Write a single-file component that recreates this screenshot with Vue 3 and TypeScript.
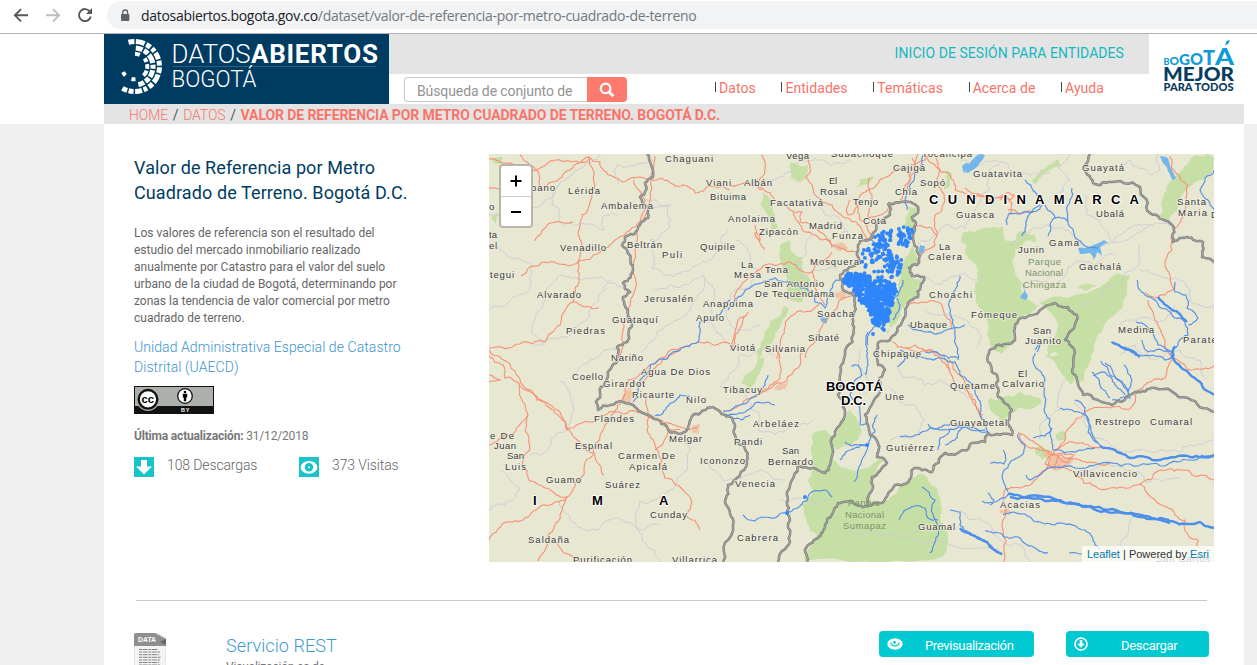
<script setup lang="ts">
type Pt = [number, number]
type Label = [string, number, number, number]

let seed = 7
const rnd = (): number => {
  seed = (seed * 16807) % 2147483647
  return seed / 2147483647
}

const parse = (s: string): Pt[] =>
  s.trim().split(/\s+/).map((p) => p.split(',').map(Number) as Pt)

// Turns a coarse polyline into an irregular, map-like line by splitting its segments.
function wiggle(s: string, amp: number, closed = false): string {
  let pts = parse(s)
  if (closed) pts.push(pts[0])
  for (let n = 0; n < 3; n++) {
    const out: Pt[] = [pts[0]]
    for (let i = 1; i < pts.length; i++) {
      const [ax, ay] = pts[i - 1]
      const [bx, by] = pts[i]
      const len = Math.hypot(bx - ax, by - ay)
      if (len > 3.5) {
        const k = (rnd() - 0.5) * 2 * amp * Math.min(len / 14, 1.2)
        out.push([(ax + bx) / 2 + (-(by - ay) / len) * k, (ay + by) / 2 + ((bx - ax) / len) * k])
      }
      out.push([bx, by])
    }
    pts = out
  }
  return 'M' + pts.map((p) => p[0].toFixed(1) + ' ' + p[1].toFixed(1)).join('L') + (closed ? 'Z' : '')
}

const parks = [
  '790,163 800,166 808,165 806,178 798,182 791,178',
  '763,192 770,200 775,215 778,228 772,230 768,215 760,205',
  '780,245 790,240 792,252 802,257 803,272 812,285 802,302 790,300 786,275 781,262',
  '784,306 789,310 778,330 768,345 759,358 756,352 766,330 776,318',
  '860,180 874,177 868,184 856,188',
  '756,380 750,388 738,384 745,376 755,368 757,357 764,358 760,372',
  '909,207 918,208 912,217 914,240 917,262 909,270 912,278 922,279 917,297 907,303 898,320 886,335 889,318 896,300 899,280 903,262 913,245 906,228',
  '946,170 952,173 950,186 944,190',
  '965,232 985,228 1003,227 1005,240 1016,240 1018,232 1028,232 1022,245 1015,250 1012,262 1017,277 1022,292 1032,302 1040,306 1020,318 1013,330 1015,342 1002,354 990,345 988,322 982,310 975,285 976,265 966,255',
  '1040,302 1062,297 1080,294 1105,284 1118,273 1129,275 1127,290 1118,312 1106,322 1096,340 1090,362 1084,380 1078,385 1075,372 1065,362 1055,352 1045,360 1048,345 1057,330 1055,318 1050,312',
  '1032,180 1040,170 1058,159 1061,166 1045,173 1035,184',
  '1078,288 1090,284 1097,286 1086,291',
  '1170,182 1182,170 1192,158 1208,154 1214,158 1212,172 1202,180 1190,187 1178,205 1168,222 1158,217 1162,200',
  '990,398 997,400 1010,396 1020,392 1040,398 1041,404 1030,410 1018,408 1010,414 1002,422 992,412 988,402',
  '1044,355 1075,357 1083,366 1077,376 1070,385 1062,375 1055,362',
  '813,433 826,430 834,438 833,460 838,465 850,470 872,464 884,460 876,474 870,490 871,502 888,500 900,486 912,478 924,475 937,488 942,508 941,522 948,540 946,552 938,558 926,560 805,561 806,551 818,538 806,520 802,505 812,495 808,480 813,470',
  '838,430 846,418 850,410 857,420 862,430 858,440 848,446 836,450 834,438',
  '1035,448 1042,446 1050,450 1049,458 1042,460 1036,454',
  '1056,434 1064,431 1067,438 1058,441',
  '491,218 497,212 495,224',
  '492,158 502,156 500,164 494,163',
  '1018,235 1035,235 1036,242 1022,243',
  '963,232 969,235 969,247 962,243',
]

const towns = [
  '622,397 628,388 633,393 631,403 623,402',
  '835,293 848,291 845,299 836,298',
  '1042,453 1052,451 1060,457 1073,459 1069,465 1058,471 1046,467 1050,462',
  '999,510 1010,506 1011,515 1001,514',
  '692,425 700,423 699,434 692,433',
  '833,244 844,243 848,249 838,251',
  '777,385 789,381 785,389 774,390',
]

const limits = [
  '489,215 500,215 515,205 530,210 545,200 560,183 575,170 590,163 600,154',
  '489,310 510,300 530,290 532,265 512,258 500,250 489,246',
  '560,183 552,205 560,222 590,224 604,230 606,215 618,215',
  '618,185 617,165 640,163 655,160',
  '545,345 532,330 540,310 545,296 560,275 585,278 605,280 625,288',
  '535,345 560,338 575,328 590,310 604,290 612,280',
  '560,381 570,395 572,415 565,430 550,438 548,450 530,455',
  '650,205 668,205 670,220 664,232 650,240 652,268 665,275 680,273 698,265 705,262 716,250 722,235 728,230',
  '645,200 656,200 672,205',
  '703,275 690,310 668,325 650,342 642,352',
  '703,275 715,290 712,315 716,332 726,340',
  '654,290 670,284 690,284 702,276',
  '752,187 770,180 788,172 800,160 815,158 830,165 850,160',
  '735,240 750,255 758,270 752,285 735,290 730,300 728,320 740,330 760,325',
  '820,200 825,215 840,220 848,232 830,240',
  '812,235 806,250 795,262 800,275 815,270 838,268',
  '730,390 748,400 760,415 758,430 775,435 790,425 812,420',
  '702,460 714,470 722,480 740,478 760,470 770,475 785,480',
  '640,500 636,520 642,540 655,550 660,562',
  '560,500 570,520 590,530 610,520 640,530 660,525',
  '500,470 520,490 505,505 489,510',
  '575,375 590,360 605,350 618,350',
  '683,430 690,450 688,470 670,490 655,500 640,502',
  '720,388 735,370 740,355 760,350 775,355',
  '780,500 800,498 830,503',
  '895,365 910,378 925,385 940,380 955,390 968,400',
  '890,388 900,402 915,405 925,420 918,435 890,440',
  '925,277 940,285 958,275 975,280 985,275',
  '918,245 930,240 945,225 965,228 975,210 990,190 985,175 1000,165',
  '1010,245 1030,230 1050,226 1070,232 1085,250 1105,245 1120,235 1135,225 1150,225',
  '1085,195 1088,215 1110,240 1118,242 1140,232 1150,225 1172,228',
  '1030,280 1050,285 1075,262 1095,265 1115,255',
  '1077,312 1085,300 1100,298 1110,285 1135,268 1140,245',
  '1140,270 1165,278 1185,282 1190,300 1214,305',
  '1120,355 1135,345 1155,360 1180,350 1200,360 1205,378',
  '1065,380 1058,395 1060,410 1045,420 1040,440',
  '1075,400 1085,425 1110,445 1130,452 1180,452 1190,445 1214,440',
  '850,530 900,538 960,548 1000,550',
  '960,510 970,520 985,522 1000,540 1020,545 1030,562',
  '1130,510 1128,525 1120,545 1122,562',
  '1085,475 1110,465 1135,472 1145,482 1180,478',
  '960,160 975,166 995,160 1010,170 1030,175 1050,172',
  '1060,195 1070,180 1058,168 1070,154',
  '1120,165 1130,160 1150,175 1160,170 1158,154',
  '1175,305 1165,320 1140,318 1120,325',
  '860,350 862,370 868,380 865,395',
  '925,310 940,315 960,318 978,330 975,348',
]

const roads = [
  '489,159 510,163 525,170 540,168 555,160 572,162 588,157 600,162 612,176 622,182 650,179 662,178 675,186 690,188 695,193 710,186 730,190',
  '520,155 530,166 540,178 543,190 552,182 570,170 590,158',
  '589,156 594,175 592,195 582,215 578,235 581,252 578,262 579,280 575,295 573,302 560,325 545,342 520,344 489,348',
  '578,262 560,264 545,262 530,267 521,276',
  '578,262 600,252 615,240 630,230 640,222',
  '573,302 585,307 599,308',
  '573,222 560,222 545,228 535,241',
  '640,222 645,200 634,180',
  '655,156 652,180 650,200 636,245 635,290 628,315 622,340 617,360',
  '489,356 503,365 505,378 525,390 550,408 562,420 567,430 592,422 605,415',
  '489,350 500,357 515,371 530,390 545,402 560,412 566,428 580,442 593,453',
  '519,385 521,398 528,415 525,430 530,450 522,465 528,478 545,488 567,497',
  '528,415 510,435 489,445',
  '489,540 510,522 530,515 550,505 567,497 580,480 593,455 603,430 615,412 622,400 628,380 650,365 668,358 680,350',
  '567,497 560,515 548,535 538,561',
  '548,535 558,545 570,555 580,562',
  '595,453 597,462 604,475',
  '605,415 625,414 645,413 660,420 675,425 690,430 697,427',
  '645,395 648,412 650,435 655,445 662,460 665,478 680,487 692,502 686,514 700,530',
  '655,450 662,445 668,430 680,430',
  '630,388 650,372 668,352 680,348 700,342 730,344',
  '723,412 740,405 760,394 780,378 780,365 776,350',
  '760,394 785,382 800,365 802,352',
  '762,155 765,170 756,182 762,190',
  '808,155 810,168 806,178 815,195 832,205 848,218 862,230 870,240',
  '730,186 750,184 762,188 775,200 790,210 802,212 800,222 820,232 832,245 845,250 858,252',
  '793,212 800,225 815,235 832,248',
  '755,225 760,240 755,232 765,250',
  '825,305 815,288 812,272 822,262 832,252',
  '730,350 735,335 742,325 748,312 738,320 730,345',
  '735,300 750,275 765,265 790,262 800,270 812,272',
  '820,303 805,312 790,317 784,330 780,345 776,358',
  '856,292 840,300 830,315 820,330 812,345 806,358',
  '858,200 868,190 880,180 895,170 910,168 925,160 930,154',
  '905,195 910,180 915,165 918,154',
  '900,200 905,185 914,172 912,158',
  '870,240 860,220 858,205 848,215 850,200',
  '870,178 872,195 868,218 880,215 893,203',
  '912,228 930,227 937,235 935,245 925,250 918,262',
  '937,235 935,215 945,200 938,185 940,170 935,155',
  '925,154 935,165 950,175 955,190 970,195 985,197 1003,195 1012,203 1010,215',
  '965,188 980,195 990,200 1010,200 1014,195 1008,192 1000,200',
  '1008,210 1020,214 1033,212',
  '908,305 925,302 942,305 950,320 952,330',
  '892,342 905,348 920,352 932,350 940,358 950,370',
  '905,348 915,345 935,352 948,362 955,385 975,400 983,415',
  '950,360 960,375 972,395 982,420',
  '1170,156 1175,172 1188,185 1185,210 1175,228 1172,250 1165,265 1170,280 1175,290',
  '1145,292 1155,298 1165,295 1175,288',
  '1148,300 1155,320 1165,340 1172,360 1165,378 1150,382 1135,395 1128,410 1110,408 1085,412 1072,425 1065,440 1055,450',
  '1172,358 1190,370 1214,366',
  '1018,432 1030,440 1040,446 1052,452',
  '1020,434 1026,446 1040,450 1052,455',
  '1052,455 1065,444 1080,443 1100,448',
  '1052,455 1070,458 1090,462 1110,463',
  '1050,456 1045,470 1035,480 1020,488 1004,492 1003,520 1004,562',
  '1058,465 1075,475 1095,486 1120,487 1140,484 1158,471 1180,470 1214,480',
  '1140,484 1155,500 1175,515 1185,520 1188,535 1198,540 1198,548',
  '1052,455 1062,453 1074,455 1068,463 1058,456 1055,468 1045,464 1052,455',
  '489,188 495,188 500,190',
  '489,382 500,380 489,375',
]

const rivers = [
  '730,300 712,320 700,322 698,342 680,350 668,358 650,365 640,380 638,392 633,402',
  '728,310 735,300 750,288 775,278 790,282 805,288 815,302 825,308 830,295 836,280 846,276 855,280 860,290',
  '655,416 668,406 680,395 690,396',
  '723,411 740,405 752,398 765,385 768,375',
  '723,415 745,412 755,403 768,402 775,405',
  '732,418 742,420 750,415',
  '743,515 755,521 775,518 787,513 800,506 812,492 825,490 832,497',
  '923,155 918,170 910,185 905,200 907,210',
  '870,240 882,248 890,258 895,265',
  '868,345 872,330 885,315 892,300 898,295 903,280',
  '867,355 866,340 868,332',
  '893,320 900,305 897,298',
  '960,276 955,290 950,300 953,320 955,330 958,360',
  '908,325 925,332 940,333 953,328 965,325',
  '925,352 940,355 958,358',
  '900,350 910,356 925,358 942,358 955,362 960,375 975,392 981,405 983,420 988,432',
  '898,367 905,355',
  '867,355 868,365 865,375',
  '851,366 858,365 862,375 850,395 858,405 860,425 868,424',
  '840,460 855,448 868,445 875,432 877,415',
  '845,442 858,445 868,445 858,470 854,482',
  '1025,180 1035,192 1045,205 1055,218 1068,222 1075,238 1085,246 1098,248',
  '1068,222 1070,200 1072,188',
  '1040,205 1032,212 1025,228 1022,236',
  '1010,213 1020,214 1032,212 1045,203',
  '1010,213 1006,220 1007,225',
  '1055,218 1050,225 1048,236',
  '900,437 915,435 930,428 945,425 960,427 975,428 988,432',
  '928,424 940,430 960,425 985,430',
  '938,450 940,438 950,430',
  '945,445 955,440 962,428',
  '1035,353 1036,368 1045,380 1045,405 1050,420 1052,440 1053,450 1065,453 1080,450 1095,448',
  '1033,438 1045,436 1052,428',
  '1018,434 1025,445 1022,455 1010,463 1004,470 1005,485 1008,492',
  '1003,450 1006,460 1004,464 990,463',
  '1026,475 1030,480 1040,475 1055,467 1075,468 1095,465 1130,464 1165,466 1190,460 1214,454',
  '1075,400 1085,408 1090,425 1095,440 1102,446',
  '1060,408 1075,412 1085,415 1088,432 1098,443',
  '982,501 995,502 1005,498 1008,494',
  '988,493 994,500 990,505',
  '1003,515 1025,514 1040,522 1060,523 1085,530 1095,545 1100,550',
  '985,531 1000,533 1020,538 1035,548 1048,553',
  '950,510 960,512 960,525 970,535 985,542 1002,555',
  '922,487 935,500 933,515 938,525 935,542 930,553',
  '899,520 910,508 925,508 928,518 938,520',
  '1137,280 1140,290 1155,300 1170,312 1185,322 1188,335 1178,345 1170,354',
  '1175,282 1175,292 1186,295 1187,308 1198,318 1188,325',
  '1136,322 1145,325 1153,333 1158,345 1172,352',
  '1142,340 1148,352 1170,352',
  '1111,342 1125,347 1140,355 1165,360 1175,355',
  '1101,361 1110,375 1125,385 1130,398 1112,400',
  '1092,372 1100,385 1110,398',
  '1105,363 1118,380 1128,392 1132,380 1124,365',
  '1093,376 1105,372 1115,385 1125,395',
  '1214,170 1205,178 1200,190 1208,200 1214,210',
  '1035,350 1040,340 1037,352',
  '1069,553 1082,554',
]

const wideRivers = [
  '1158,297 1172,310 1187,322',
  '1172,355 1185,370 1200,382 1214,395',
  '1175,346 1172,356',
  '1100,446 1115,450 1130,458 1160,460 1190,457 1214,456',
  '1008,494 1030,498 1060,500 1090,506 1125,513 1150,519 1170,521 1190,524 1200,522 1214,528',
  '1010,497 1040,496 1075,504 1105,511 1135,514 1170,523',
  '1112,342 1130,350 1140,357',
  '960,528 985,541 1002,554',
]

const borders = [
  '647,154 651,165 653,177 645,183 646,190 640,197 649,208 648,218 638,228 625,237 622,245 627,250 633,268 623,283 630,292 623,297 628,310 632,325 627,342 617,347 617,358 608,375 600,392 596,402 598,410 623,402 635,407 652,417 670,432 685,432 693,415 713,407 732,418 735,435 743,445 747,463 728,485 725,502 733,525 723,562',
  '888,203 902,202 918,207 918,213 912,217 915,230 914,243 918,253 917,265 909,268 912,276 924,277 918,297 908,303 898,327 890,340 878,343 877,352 878,365 885,370 880,388 865,415 870,435 878,443 877,457 887,463 872,477 873,488 867,505',
  '888,203 890,215 877,223 872,238 858,245 860,263 840,275 842,287 852,293 855,303 854,327 845,355 840,375 838,395 845,412 832,438 830,465 825,473 808,468 798,463 787,492 787,513 790,542 778,562',
  '807,562 805,552 818,538 825,525 838,503 852,501 867,506 882,503 895,485 907,483 912,470 932,472 945,453 958,453 972,443 985,442 988,433 1012,435 1007,422 1012,410 998,397 997,375 988,362 988,355 997,345 1015,340 1015,328 1025,318 1055,303 1068,307 1077,315 1065,340 1075,353 1075,375 1083,395 1112,405 1135,392 1155,388 1188,398 1214,412',
  '1090,154 1085,165 1093,183 1108,182 1140,187 1150,213 1170,223 1173,242 1187,237 1203,242 1202,257 1214,263',
]

const lakes = [
  '1078,248 1090,247 1096,244 1104,240 1108,243 1100,247 1102,256 1097,252 1094,260 1090,253 1080,254',
  '965,172 972,160 980,154 985,155 978,166 968,173',
  '962,166 966,163 970,164 964,173',
  '1160,156 1168,158 1176,178 1172,180',
  '820,316 828,318 826,324 821,321',
  '920,245 925,246 922,256 919,252',
  '1022,280 1028,296 1026,300 1020,298 1024,292',
]

const cityPoly = '848,272 865,273 872,283 880,279 895,284 897,294 892,306 888,322 882,329 873,323 870,312 860,302 853,290 843,281'

const parkPaths = parks.map((p) => wiggle(p, 2.2, true))
const townPaths = towns.map((p) => wiggle(p, 2, true))
const lakePaths = lakes.map((p) => wiggle(p, 1.2, true))
const limitPaths = limits.map((p) => wiggle(p, 3))
const roadPaths = roads.map((p) => wiggle(p, 2.4))
const riverPaths = rivers.map((p) => wiggle(p, 2.4))
const widePaths = wideRivers.map((p) => wiggle(p, 1.8))
const borderPaths = borders.map((p) => wiggle(p, 2.8))

function inside(x: number, y: number, poly: Pt[]): boolean {
  let hit = false
  for (let i = 0, j = poly.length - 1; i < poly.length; j = i++) {
    const [xi, yi] = poly[i]
    const [xj, yj] = poly[j]
    if (yi > y !== yj > y && x < ((xj - xi) * (y - yi)) / (yj - yi) + xi) hit = !hit
  }
  return hit
}

function scatter(area: string, count: number): Pt[] {
  const poly = parse(area)
  const xs = poly.map((p) => p[0])
  const ys = poly.map((p) => p[1])
  const [x0, x1, y0, y1] = [Math.min(...xs), Math.max(...xs), Math.min(...ys), Math.max(...ys)]
  const out: Pt[] = []
  while (out.length < count) {
    const x = x0 + rnd() * (x1 - x0)
    const y = y0 + rnd() * (y1 - y0)
    if (inside(x, y, poly)) out.push([+x.toFixed(1), +y.toFixed(1)])
  }
  return out
}

const dots: Pt[] = [
  ...scatter(cityPoly, 480),
  ...scatter('872,236 884,231 892,230 892,238 886,246 878,240', 26),
  ...scatter('897,228 912,226 913,234 907,246 898,244', 32),
  ...scatter('870,243 885,243 893,250 889,262 872,262', 38),
  ...scatter('889,258 903,256 900,272 892,274', 26),
  ...scatter('862,250 870,248 874,262 866,268 860,262', 12),
  ...scatter('872,264 900,262 897,284 868,282', 24),
  ...scatter('882,240 900,240 900,262 882,280', 10),
  [873, 334], [884, 330], [805, 497], [787, 513], [867, 445],
]

const labels: Label[] = [
  ['Chaguani', 665, 162, 48], ['bano', 531, 191, 24], ['Lérida', 568, 194, 32], ['Ambalema', 601, 209, 52],
  ['Viani', 706, 186, 25], ['Bituima', 710, 200, 36], ['Albán', 744, 186, 28], ['Vega', 786, 159, 23],
  ['Subachoque', 831, 157, 62], ['Cajigá', 893, 171, 32], ['Tocancipá', 922, 157, 50], ['Sopó', 920, 186, 25],
  ['El', 829, 184, 8], ['Rosal', 820, 195, 27], ['Chía', 895, 195, 22], ['Facatativá', 770, 206, 53],
  ['Tenjo', 853, 205, 25], ['Anolaima', 728, 222, 47], ['Zipacón', 759, 235, 39], ['Cota', 863, 224, 23],
  ['Madrid', 809, 229, 33], ['Funza', 832, 239, 31], ['Quipile', 700, 250, 35], ['Mosquera', 810, 265, 49],
  ['La', 741, 268, 12], ['Mesa', 734, 278, 27], ['Tena', 765, 273, 23], ['San Antonio', 764, 287, 60],
  ['De Tequendama', 755, 297, 79], ['Anapoima', 703, 307, 50], ['Apulo', 696, 321, 28], ['Soacha', 817, 317, 37],
  ['Sibaté', 808, 341, 31], ['Viotá', 730, 351, 25], ['Silvania', 765, 352, 40], ['Beltrán', 627, 248, 35],
  ['Puli', 662, 258, 20], ['Venadillo', 560, 251, 46], ['ta', 489, 238, 8], ['el', 489, 249, 8],
  ['tegui', 490, 278, 24], ['Alvarado', 537, 298, 44], ['Jerusalén', 644, 302, 49], ['Guataquí', 612, 323, 46],
  ['Piedras', 566, 334, 39], ['Nariño', 611, 361, 32], ['Coello', 572, 380, 31], ['Agua De Dios', 641, 375, 69],
  ['Girardot', 603, 387, 42], ['Ricaurte', 632, 398, 42], ['Nilo', 686, 403, 20], ['Tibacuy', 723, 393, 39],
  ['Flandes', 594, 422, 40], ['Arbeláez', 753, 427, 46], ['e De', 490, 439, 24], ['Juan', 494, 449, 22],
  ['San', 507, 459, 17], ['Luis', 505, 470, 21], ['Espinal', 575, 449, 37], ['Melgar', 669, 442, 33],
  ['Carmen De', 618, 459, 57], ['Apicalá', 629, 470, 38], ['Pandi', 734, 445, 28], ['Icononzo', 700, 464, 45],
  ['San', 782, 454, 17], ['Bernardo', 768, 465, 45], ['Guamo', 546, 483, 35], ['Suárez', 605, 488, 35],
  ['Venecia', 735, 487, 40], ['Cunday', 650, 518, 37], ['Cabrera', 737, 541, 41], ['Saldaña', 528, 543, 41],
  ['Purificación', 573, 563, 59], ['Villarrica', 672, 563, 45], ['Guatavita', 973, 177, 49], ['Guasca', 956, 218, 38],
  ['Guayatá', 1082, 171, 42], ['Ubalá', 1096, 217, 28], ['Santa', 1177, 205, 29], ['Maria', 1178, 216, 29],
  ['D', 1211, 218, 7], ['Junin', 1018, 253, 26], ['Gama', 1049, 246, 30], ['Gachalá', 1079, 270, 42],
  ['La', 939, 250, 11], ['Calera', 928, 260, 34], ['Choachi', 929, 298, 43], ['Fómeque', 971, 318, 46],
  ['Ubaque', 910, 328, 37], ['Chipaque', 873, 357, 48], ['San', 1033, 334, 18], ['Juanito', 1025, 344, 36],
  ['Medina', 1118, 333, 36], ['Paratebueno', 1183, 343, 66], ['El', 1018, 377, 9], ['Calvario', 1002, 387, 42],
  ['Quetame', 950, 389, 45], ['Une', 885, 400, 19], ['Guayabetal', 950, 426, 57], ['Gutiérrez', 886, 451, 48],
  ['Restrepo', 1095, 425, 45], ['Cumaral', 1150, 425, 42], ['Villavicencio', 1073, 477, 64], ['Acacias', 1000, 508, 40],
  ['Guamal', 918, 530, 37], ['San Carlos', 1156, 562, 54], ['o', 489, 210, 6],
]

const parkLabels: Label[] = [
  ['Parque', 1028, 265, 33], ['Nacional', 1025, 276, 38], ['Chingaza', 1023, 288, 43],
  ['Parque', 848, 506, 32], ['Nacional', 845, 518, 39], ['Sumapaz', 843, 529, 43],
]

const regions: Label[] = [
  ['CUNDINAMARCA', 929, 204, 210], ['BOGOTÁ', 826, 391, 57], ['D.C.', 841, 405, 25],
  ['I', 533, 505, 4], ['M', 592, 505, 11], ['A', 659, 505, 10],
]

const menu: string[] = ['Datos', 'Entidades', 'Temáticas', 'Acerca de', 'Ayuda']

// Blocks of the concentric-arc emblem in the site logo.
const rings = [
  { r: 25, w: 5, dash: '6 1.5 9 1.8 5 2 4 1.6 7 1.5 5 1.5', from: -104, to: 119 },
  { r: 18.6, w: 5, dash: '7 1.6 5 1.6 9 1.8 4 1.6', from: -86, to: 78 },
  { r: 12.8, w: 4, dash: '5 6 4 2 5 1.6 6 9 4 7 4 60', from: -88, to: 170 },
]
function arc(r: number, from: number, to: number): string {
  const at = (deg: number): string => {
    const a = (deg * Math.PI) / 180
    return `${(30.5 + r * Math.cos(a)).toFixed(2)} ${(32.5 + r * Math.sin(a)).toFixed(2)}`
  }
  return `M${at(from)}A${r} ${r} 0 ${to - from > 180 ? 1 : 0} 1 ${at(to)}`
}
const ringPaths = rings.map((g) => ({ ...g, d: arc(g.r, g.from, g.to) }))
</script>

<template>
  <div class="screen">
    <div class="browser">
      <svg class="nav-icons" width="107" height="33" viewBox="0 0 107 33" fill="none" stroke-width="1.9">
        <path d="M28 15.3H15.5M21 9.2L14.9 15.3L21 21.4" stroke="#55585c" />
        <path d="M46 15.3H58.5M53 9.2L59.1 15.3L53 21.4" stroke="#bcbec1" />
        <path d="M90 11.8A6 6 0 1 0 90.8 16.5" stroke="#55585c" />
        <path d="M92 8V14H86Z" fill="#55585c" />
      </svg>
      <div class="address">
        <svg width="10" height="13" viewBox="0 0 10 13">
          <rect x="1" y="5" width="8.4" height="7" rx="1" fill="#5f6368" />
          <path d="M2.8 5.5V3.4a2.4 2.4 0 0 1 4.8 0V5.5" fill="none" stroke="#5f6368" stroke-width="1.3" />
        </svg>
        <span class="url"><b>datosabiertos.bogota.gov.co</b>/dataset/valor-de-referencia-por-metro-cuadrado-de-terreno</span>
      </div>
    </div>

    <header class="header">
      <div class="brand">
        <svg width="285" height="70" viewBox="0 0 285 70">
          <path
            v-for="(g, i) in ringPaths" :key="i" :d="g.d" fill="none" stroke="#fff"
            :stroke-width="g.w" :stroke-dasharray="g.dash"
          />
          <text class="lg light" x="67.5" y="29" font-size="26" textLength="79" lengthAdjust="spacingAndGlyphs">DATOS</text>
          <text class="lg heavy" x="147" y="29" font-size="26" textLength="127" lengthAdjust="spacing">ABIERTOS</text>
          <path d="M69 32.5H272" stroke="#3c6f8e" stroke-width=".7" />
          <text class="lg light" x="67.5" y="53" font-size="23" textLength="85" lengthAdjust="spacingAndGlyphs">BOGOTÁ</text>
        </svg>
      </div>
      <div class="middle">
        <div class="login"><a>INICIO DE SESIÓN PARA ENTIDADES</a></div>
        <div class="tools">
          <div class="search">
            <div class="field">Búsqueda de conjunto de</div>
            <div class="go">
              <svg width="16" height="16" viewBox="0 0 16 16" fill="none" stroke="#fff">
                <circle cx="6.6" cy="6.4" r="4.8" stroke-width="2.3" />
                <path d="M10.2 10L14.4 14.2" stroke-width="3" />
              </svg>
            </div>
          </div>
          <nav class="menu"><a v-for="m in menu" :key="m">{{ m }}</a></nav>
        </div>
      </div>
      <div class="city">
        <svg width="95" height="70" viewBox="0 0 95 70">
          <g class="cl" fill="#0f9bd7">
            <text x="14.5" y="31" font-size="9.5" textLength="6" lengthAdjust="spacingAndGlyphs">B</text>
            <text x="20.5" y="31" font-size="12" textLength="9.5" lengthAdjust="spacingAndGlyphs">O</text>
            <text x="30" y="31" font-size="15" textLength="11" lengthAdjust="spacingAndGlyphs">G</text>
            <text x="41" y="31" font-size="17.5" textLength="13" lengthAdjust="spacingAndGlyphs">O</text>
            <text x="54" y="31" font-size="20" textLength="12" lengthAdjust="spacingAndGlyphs">T</text>
            <text x="66" y="31" font-size="22" textLength="19" lengthAdjust="spacingAndGlyphs">A</text>
          </g>
          <path d="M76 11.5L77.5 7L81 6L79.5 9.5Z" fill="#0f9bd7" />
          <g class="cl" fill="#0a3c60">
            <text x="14" y="47" font-size="18.5" textLength="71" lengthAdjust="spacingAndGlyphs">MEJOR</text>
            <text x="14.5" y="57" font-size="10.5" textLength="70" lengthAdjust="spacingAndGlyphs">PARA TODOS</text>
          </g>
        </svg>
      </div>
    </header>

    <div class="crumb-row">
      <div class="crumbs">
        <a>HOME</a><i>/</i><a>DATOS</a><i>/</i><strong>VALOR DE REFERENCIA POR METRO CUADRADO DE TERRENO. BOGOTÁ D.C.</strong>
      </div>
    </div>

    <div class="page">
      <main class="main">
        <section class="info">
          <h1>Valor de Referencia por Metro<br />Cuadrado de Terreno. Bogotá D.C.</h1>
          <p class="desc">
            Los valores de referencia son el resultado del<br />
            estudio del mercado inmobiliario realizado<br />
            anualmente por Catastro para el valor del suelo<br />
            urbano de la ciudad de Bogotá, determinando por<br />
            zonas la tendencia de valor comercial por metro<br />
            cuadrado de terreno.
          </p>
          <a class="entity">Unidad Administrativa Especial de Catastro<br />Distrital (UAECD)</a>
          <svg class="license" width="80" height="28" viewBox="0 0 80 28">
            <rect width="80" height="28" fill="#111" />
            <rect x="1" y="1" width="78" height="19" fill="#abb1aa" />
            <circle cx="14" cy="13.3" r="11.7" fill="#abb1aa" />
            <circle cx="14" cy="13.3" r="9.3" fill="#fff" stroke="#111" stroke-width="2.4" />
            <text x="7.5" y="17" font-size="10.5" textLength="12.6" lengthAdjust="spacingAndGlyphs" class="bold">cc</text>
            <circle cx="51" cy="10" r="7.3" fill="#fff" stroke="#111" stroke-width="1.3" />
            <circle cx="51" cy="6" r="1.3" />
            <path d="M48.8 7.8H53.2V11.5H52.2V15.2H49.8V11.5H48.8Z" />
            <text x="47" y="26.3" font-size="5.5" fill="#fff" textLength="8.5" class="bold">BY</text>
          </svg>
          <p class="updated"><b>Última actualización:</b> 31/12/2018</p>
          <div class="stats">
            <svg width="20" height="20" viewBox="0 0 20 20">
              <rect width="20" height="20" fill="#18c3c9" />
              <path d="M7 3H13V9.5H18L10 17.5L2 9.5H7Z" fill="#fff" />
            </svg>
            <span class="s1">108 Descargas</span>
            <svg width="20" height="20" viewBox="0 0 20 20">
              <rect width="20" height="20" fill="#18c3c9" />
              <ellipse cx="10" cy="10.3" rx="8.3" ry="6.4" fill="#fff" />
              <circle cx="10" cy="10.3" r="4.2" fill="#18c3c9" />
              <circle cx="10" cy="10.3" r="1" fill="#dff" />
            </svg>
            <span class="s2">373 Visitas</span>
          </div>
        </section>

        <section class="map">
          <svg width="725" height="408" viewBox="489 154 725 408">
            <rect x="489" y="154" width="725" height="408" fill="#e8e7d2" />
            <path v-for="(d, i) in parkPaths" :key="'p' + i" :d="d" fill="#c6dfa5" />
            <path v-for="(d, i) in townPaths" :key="'t' + i" :d="d" fill="#f2b696" opacity=".7" />
            <g fill="none" stroke="#cccbd6" stroke-width=".9">
              <path v-for="(d, i) in limitPaths" :key="'l' + i" :d="d" />
            </g>
            <path v-for="(d, i) in lakePaths" :key="'k' + i" :d="d" fill="#72b6ec" />
            <g fill="none" stroke="#f78d73" stroke-width="1.05">
              <path v-for="(d, i) in roadPaths" :key="'r' + i" :d="d" />
            </g>
            <g fill="none" stroke="#5490e6" stroke-width="1.15">
              <path v-for="(d, i) in riverPaths" :key="'v' + i" :d="d" />
            </g>
            <g fill="none" stroke="#4b8feb" stroke-width="2.4">
              <path v-for="(d, i) in widePaths" :key="'w' + i" :d="d" />
            </g>
            <g fill="none" stroke="#7e7e7e" stroke-width="2.5" stroke-linejoin="round">
              <path v-for="(d, i) in borderPaths" :key="'b' + i" :d="d" />
            </g>
            <g fill="none" stroke="#b4b4ae" stroke-width=".8" stroke-linejoin="round">
              <path v-for="(d, i) in borderPaths" :key="'c' + i" :d="d" />
            </g>
            <g class="place">
              <text v-for="(l, i) in labels" :key="'n' + i" :x="l[1]" :y="l[2]" :textLength="l[3]">{{ l[0] }}</text>
            </g>
            <g class="place green">
              <text v-for="(l, i) in parkLabels" :key="'g' + i" :x="l[1]" :y="l[2]" :textLength="l[3]">{{ l[0] }}</text>
            </g>
            <g class="place region">
              <text v-for="(l, i) in regions" :key="'q' + i" :x="l[1]" :y="l[2]" :textLength="l[3]">{{ l[0] }}</text>
            </g>
            <g fill="#2f86fb">
              <circle v-for="(p, i) in dots" :key="'d' + i" :cx="p[0]" :cy="p[1]" r="1.95" />
            </g>
          </svg>
          <div class="zoom">
            <div>
              <svg width="12" height="12" viewBox="0 0 12 12"><path d="M6 .5V11.5M.5 6H11.5" stroke="#000" stroke-width="2" /></svg>
            </div>
            <div>
              <svg width="12" height="12" viewBox="0 0 12 12"><path d="M1 6H11" stroke="#000" stroke-width="2" /></svg>
            </div>
          </div>
          <div class="credit"><a>Leaflet</a> | Powered by <a>Esri</a></div>
        </section>
      </main>

      <hr />

      <section class="resource">
        <svg class="file" width="32" height="40" viewBox="0 0 32 40">
          <path d="M2 0H22L32 5V40H0V2Q0 0 2 0Z" fill="#f4f4f4" stroke="#ccc" stroke-width=".6" />
          <path d="M2 0H21L32 6V13H0V2Q0 0 2 0Z" fill="#8f8f8f" />
          <path d="M26 9L32 6V12Z" fill="#666" />
          <text x="4" y="9.3" font-size="6.5" fill="#fff" textLength="18" lengthAdjust="spacingAndGlyphs" class="bold">DATA</text>
          <path d="M5 16.5H24M5 19H26M5 21.7H25M5 24.3H27M5 27H26M5 29.5H25M5 32H26" stroke="#777" stroke-width=".9" stroke-dasharray="3 .6 5 .7" />
        </svg>
        <div class="res-text">
          <a>Servicio REST</a>
          <p>Visualización es de</p>
        </div>
        <div class="btn b1">
          <svg width="16" height="12" viewBox="0 0 16 12">
            <ellipse cx="8" cy="6" rx="7.7" ry="5.8" fill="#fff" />
            <path d="M3.6 4.6A4.6 4.6 0 0 0 12.4 4.6" fill="none" stroke="#00c9d2" stroke-width="1.3" />
            <circle cx="7.6" cy="4.4" r="1.4" fill="#00c9d2" />
          </svg>
          <span>Previsualización</span>
        </div>
        <div class="btn b2">
          <svg width="14" height="14" viewBox="0 0 14 14">
            <circle cx="7" cy="7" r="6" fill="none" stroke="#fff" stroke-width="1.7" />
            <path d="M5.7 3H8.3V6.8H10.6L7 10.8L3.4 6.8H5.7Z" fill="#fff" />
          </svg>
          <span>Descargar</span>
        </div>
      </section>
    </div>
  </div>
</template>

<style>
html,
body {
  margin: 0;
  overflow: hidden;
  background: #f0f0f0;
}
</style>

<style scoped>
.screen {
  height: 665px;
  overflow: hidden;
  background: #f0f0f0;
  font-family: Roboto, "Liberation Sans", sans-serif;
}
svg {
  display: block;
  flex: none;
}
.browser {
  display: flex;
  height: 33px;
  background: #fff;
  border-bottom: 1px solid #b3b3b5;
}
.address {
  flex: 1;
  display: flex;
  align-items: center;
  height: 28px;
  margin-top: 1px;
  padding-left: 13px;
  border-radius: 14px 0 0 14px;
  background: #f1f3f4;
}
.url {
  margin-left: 11px;
  font: 14px "Open Sans", "Noto Sans", sans-serif;
  letter-spacing: -0.3px;
  color: #74787c;
  white-space: nowrap;
}
.url b {
  font-weight: 400;
  color: #202124;
}
.header {
  display: flex;
  height: 70px;
  padding: 0 13px 0 104px;
  background: #fff;
}
.brand {
  width: 285px;
  background: #003c61;
}
.lg {
  fill: #fff;
  font-family: Roboto, sans-serif;
}
.light {
  font-weight: 300;
}
.heavy {
  font-weight: 700;
}
.middle {
  width: 760px;
}
.login {
  height: 40px;
  padding-right: 25px;
  background: #e4e4e4;
  text-align: right;
  font-size: 14px;
  line-height: 39px;
  letter-spacing: 0.06px;
  color: #14b9c0;
}
.tools {
  display: flex;
  height: 30px;
}
.search {
  display: flex;
  width: 223px;
  height: 25px;
  margin: 3px 0 0 15px;
}
.field {
  box-sizing: border-box;
  width: 183px;
  height: 25px;
  border: 1px solid #c8c8c8;
  border-right: 0;
  border-radius: 4px 0 0 4px;
  padding-left: 12px;
  font-size: 14px;
  line-height: 26px;
  letter-spacing: -0.1px;
  color: #939393;
  white-space: nowrap;
}
.go {
  flex: 1;
  display: flex;
  align-items: center;
  justify-content: center;
  border-radius: 0 4px 4px 0;
  background: #ff7a6e;
}
.menu {
  display: flex;
  flex: 1;
  justify-content: space-between;
  padding: 8px 45px 0 88px;
  font-size: 14px;
  line-height: 13px;
  letter-spacing: 0.05px;
  color: #f4746a;
}
.menu a {
  height: 11px;
  padding-left: 4px;
  white-space: nowrap;
  background: linear-gradient(#444, #444) 0 0 / 1px 10px no-repeat;
}
.city {
  width: 95px;
}
.cl {
  font-family: Lato, sans-serif;
  font-weight: 900;
}
.crumb-row {
  height: 20px;
  padding: 0 13px 0 104px;
  background: #fff;
}
.crumbs {
  height: 20px;
  padding-left: 25px;
  background: #e4e4e4;
  font-size: 14px;
  line-height: 22px;
  letter-spacing: -0.09px;
  color: #f9756a;
  white-space: nowrap;
}
.crumbs a {
  font-weight: 300;
}
.crumbs i {
  display: inline-block;
  width: 15px;
  text-align: center;
  font-style: normal;
  color: #555;
}
.page {
  width: 1140px;
  height: 541px;
  margin-left: 104px;
  background: #fff;
  overflow: hidden;
}
.main {
  display: flex;
  padding: 30px 30px 0;
}
.info {
  width: 355px;
  color: #666;
}
h1 {
  margin: 1px 0 0;
  font-size: 18px;
  font-weight: 400;
  line-height: 25px;
  letter-spacing: 0.1px;
  color: #003c61;
  white-space: nowrap;
}
.desc {
  margin: 20px 0 0;
  font-size: 12px;
  line-height: 17px;
  white-space: nowrap;
}
.entity {
  display: block;
  margin-top: 10px;
  font-size: 14px;
  font-weight: 300;
  line-height: 20px;
  letter-spacing: 0.07px;
  color: #3c93cf;
}
.license {
  margin-top: 9px;
}
.bold {
  font-family: "Liberation Sans", sans-serif;
  font-weight: 700;
}
.updated {
  margin: 14px 0 0;
  font-size: 12px;
  line-height: 16px;
  letter-spacing: -0.18px;
  color: #777;
}
.stats {
  display: flex;
  margin-top: 13px;
  font-size: 14px;
  font-weight: 300;
  line-height: 17px;
  letter-spacing: -0.12px;
}
.s1 {
  width: 132px;
  padding-left: 13px;
}
.s2 {
  padding-left: 13px;
}
.map {
  position: relative;
  width: 725px;
  height: 408px;
}
.place {
  font: 9.5px "Liberation Sans", sans-serif;
  fill: #3a3a3a;
  stroke: #efeee0;
  stroke-width: 1.6px;
  stroke-linejoin: round;
  paint-order: stroke;
}
.green {
  fill: #7d946a;
  stroke: none;
}
.region {
  font-size: 13px;
  font-weight: 700;
  fill: #000;
  stroke: #fff;
  stroke-width: 2px;
}
.zoom {
  position: absolute;
  left: 10px;
  top: 10px;
  width: 30px;
  border: 2px solid #b7b6a8;
  border-radius: 4px;
  background: #fff;
}
.zoom div {
  display: flex;
  align-items: center;
  justify-content: center;
  height: 30px;
}
.zoom div:first-child {
  border-bottom: 1px solid #ccc;
}
.zoom div:last-child {
  height: 29px;
}
.credit {
  position: absolute;
  right: 0;
  bottom: 0;
  padding: 0 5px;
  background: rgba(255, 255, 255, 0.75);
  font: 11px/16px "Liberation Sans", sans-serif;
  color: #333;
}
.credit a {
  color: #0078a8;
}
hr {
  height: 1px;
  margin: 38px 37px 0 32px;
  border: 0;
  background: #c9c9c9;
}
.resource {
  display: flex;
  padding: 30px 35px 0 30px;
}
.file {
  margin-top: 2px;
}
.res-text {
  width: 653px;
  padding-left: 60px;
  white-space: nowrap;
}
.res-text a {
  display: block;
  font-size: 18px;
  line-height: 29px;
  font-weight: 300;
  letter-spacing: 0.08px;
  color: #3c9bd5;
}
.res-text p {
  margin: 0;
  font-size: 12px;
  line-height: 14px;
  letter-spacing: -0.2px;
  color: #777;
}
.btn {
  display: flex;
  align-items: center;
  box-sizing: border-box;
  height: 26px;
  border-radius: 4px;
  background: #00c9d2;
  font-size: 13px;
  color: #fff;
}
.btn span {
  margin-top: 3px;
}
.b1 {
  width: 155px;
  padding-left: 8px;
}
.b1 span {
  margin-left: 22px;
  letter-spacing: -0.35px;
}
.b2 {
  width: 143px;
  margin-left: 32px;
  padding-left: 8px;
}
.b2 span {
  margin-left: 33px;
  letter-spacing: -0.3px;
}
</style>
